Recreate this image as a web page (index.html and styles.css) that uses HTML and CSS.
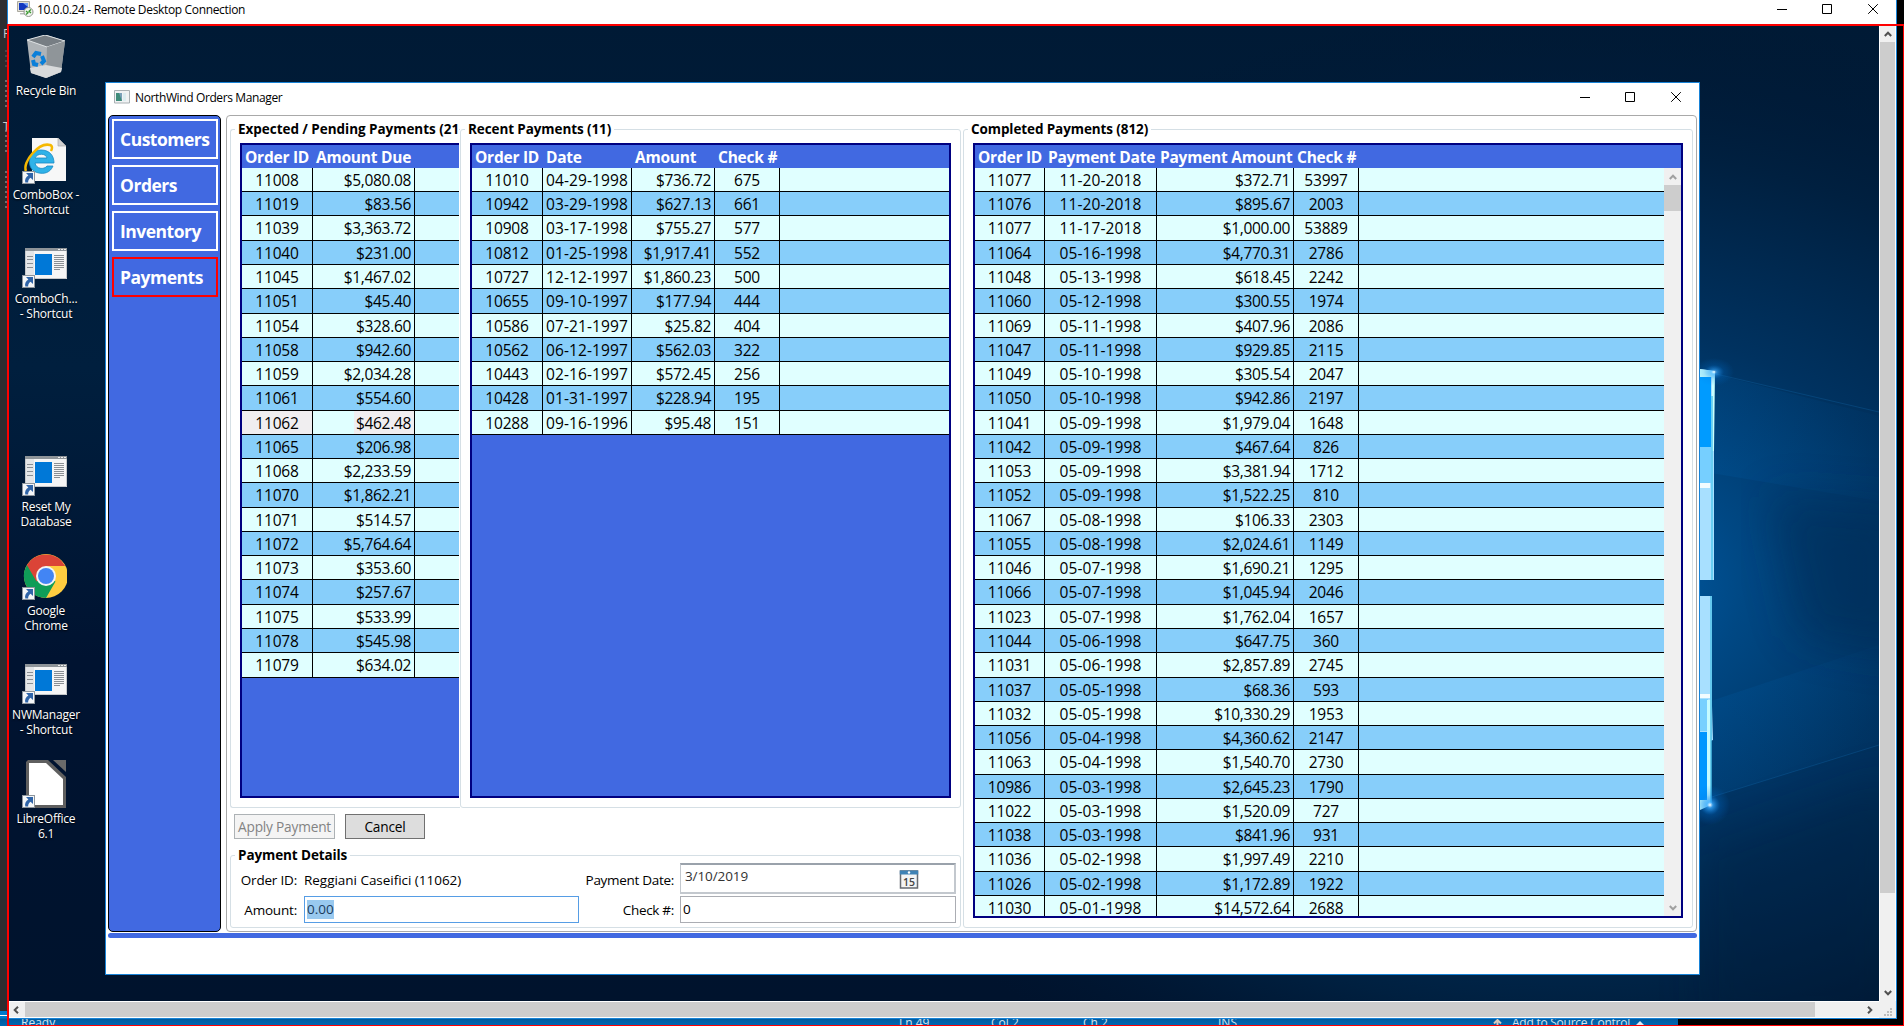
FILE: index.html
```html
<!DOCTYPE html>
<html lang="en">
<head>
<meta charset="utf-8">
<title>10.0.0.24 - Remote Desktop Connection</title>
<link rel="stylesheet" href="styles.css">
</head>
<body>
<svg width="0" height="0" class="defs">
  <defs>
    <symbol id="link" viewBox="0 0 13 13"><rect x=".5" y=".5" width="12" height="12" fill="#f4f6f8" stroke="#8d959c"/><path d="M4 2h7v7L8.600 6.700C6.600 8 6 9.500 6.200 11.500H3.300C2.500 8.500 3.800 6 6.400 4.400z" fill="#2f64a8"/></symbol>
    <symbol id="app" viewBox="0 0 42 31"><rect width="42" height="31" fill="#f5f5f5"/><rect width="42" height="3" fill="#8e9499"/><path d="M33 1h2v1h-2zm3 0h2v1h-2zm3 0h2v1h-2z" fill="#eee"/><rect x="1" y="3" width="8" height="27" fill="#e4e6e8"/><rect x="10" y="6" width="17" height="21" fill="#0078d7"/><path d="M2 8.500h6M2 11.500h6M2 15.500h6M2 19.500h6M29 7.500h10M29 9.500h10M29 11.500h10M29 13.500h10M29 15.500h10M29 17.500h10M29 19.500h10M29 21.500h6" stroke="#8a8f94"/><path d="M.5 3v27.500h41V3" fill="none" stroke="#c4c7ca"/></symbol>
    <symbol id="controls" viewBox="0 0 102 11"><path d="M0 5.500h10M45.500.5h9v9h-9z" fill="none" stroke="#000"/><path d="M91.200.2l9.600 9.600M100.800.2l-9.600 9.600" stroke="#000"/></symbol>
    <symbol id="chev" viewBox="0 0 8 6"><path d="M.8 5L4 1.700 7.200 5" fill="none" stroke="currentColor" stroke-width="2"/></symbol>
  </defs>
</svg>

<div class="host">
  <aside class="ide-edge">
    <span class="e1">F</span><span class="dots d1"></span><span class="dots d2"></span><span class="e2">T</span><span class="dots d3"></span><span class="dots d4"></span>
  </aside>
  <footer class="ide-status">
    <i class="tab"></i><span class="s-ready">Ready</span><span class="s-ln">Ln 49</span><span class="s-col">Col 2</span><span class="s-ch">Ch 2</span><span class="s-ins">INS</span><span class="s-up"><svg width="9" height="8" viewBox="0 0 9 8"><path d="M1 4.500L4.500 1 8 4.500M4.500 1v7" fill="none" stroke="#d8c9be" stroke-width="2"/></svg></span><span class="s-src">Add to Source Control</span><svg class="s-tri" width="8" height="5"><path d="M0 5l4-4 4 4z" fill="#dfe9f2"/></svg>
  </footer>

  <section class="rdp">
    <header class="rdp-title">
      <svg width="17" height="16" viewBox="0 0 17 16"><path d="M.5.500h12v10H.5z" fill="#e3e1d8" stroke="#aaa99f"/><path d="M2 2h9v7H2z" fill="#1238c0"/><path d="M6 2h5v4z" fill="#6f9df0"/><path d="M3 12h7v1.500H3z" fill="#bbb"/><circle cx="11.500" cy="11" r="4.500" fill="#f3f5f0" stroke="#8f958d"/><path d="M9 10l2 1.800L9 13.500M14 8.500l-2 1.700 2 1.800" fill="none" stroke="#3c9a32" stroke-width="1.300"/></svg>
      <span>10.0.0.24 - Remote Desktop Connection</span>
      <svg class="ctl" width="102" height="11"><use href="#controls"/></svg>
    </header>
    <div class="view">
      <main class="desktop">
        <svg class="wall" width="1870" height="975" viewBox="0 0 1870 975" preserveAspectRatio="none">
          <defs>
            <radialGradient id="glow" gradientUnits="userSpaceOnUse" cx="1560" cy="555" r="800" gradientTransform="translate(1560 555) scale(1 .72) translate(-1560 -555)"><stop offset="0" stop-color="#0064b4"/><stop offset=".22" stop-color="#004884"/><stop offset=".45" stop-color="#003260"/><stop offset=".75" stop-color="#002040"/><stop offset="1" stop-color="#001733" stop-opacity="0"/></radialGradient>
            <linearGradient id="beam" x1="0" x2="1"><stop offset="0" stop-color="#0067b8" stop-opacity=".5"/><stop offset="1" stop-color="#0067b8" stop-opacity=".1"/></linearGradient>
            <radialGradient id="spark"><stop offset="0" stop-color="#fff"/><stop offset=".15" stop-color="#35a8ff" stop-opacity=".8"/><stop offset=".5" stop-color="#0078e0" stop-opacity=".25"/><stop offset="1" stop-color="#0078e0" stop-opacity="0"/></radialGradient>
            <linearGradient id="base" x1="0" x2="0" y1="0" y2="1"><stop offset="0" stop-color="#001a35"/><stop offset=".35" stop-color="#001f3e"/><stop offset=".65" stop-color="#001331"/><stop offset="1" stop-color="#00132d"/></linearGradient>
            <filter id="soft" x="-20%" y="-40%" width="140%" height="180%"><feGaussianBlur stdDeviation="22"/></filter>
          </defs>
          <path d="M0 0h1870v975H0z" fill="url(#base)"/>
          <path d="M0 0h1870v975H0z" fill="url(#glow)"/>
          <path d="M1690 344l180 46v85l-180-30zM1690 775l180-56v-100l-180 60z" fill="url(#beam)" opacity=".35"/>
          <path d="M1760 470l140 10v150l-110-20z" fill="#00264d" opacity=".45" filter="url(#soft)"/>
          <path d="M1690 820l200-70v260h-200z" fill="#001a3a" opacity=".3" filter="url(#soft)"/>
          <path d="M1690 344l180 42M1690 775l180-56" stroke="#1676bd" opacity=".25"/>
          <path d="M1691 343l14 2v209h-14z" fill="#a8e0ff"/><path d="M1691 351h11v70h-11z" fill="#009bff"/><path d="M1691 421h11v36h-11z" fill="#76cfff"/><path d="M1691 457h10v5h-10z" fill="#f2fcff"/>
          <path d="M1691 343l15 2-1 80-2 0v-74h-12z" fill="#c9ffff"/><path d="M1703 370v184" stroke="#55c8ee" stroke-width="1.500"/>
          <path d="M1691 570h12v110l1 34-13 5z" fill="#a8e0ff"/><path d="M1691 668h10v4h-10z" fill="#f2fcff"/><path d="M1691 673h8v32h-8z" fill="#78d0ff"/><path d="M1691 706h8v70h-8z" fill="#0096ff"/><path d="M1691 774h7v-100h4v105l-11 5z" fill="#c6fbff"/><path d="M1702 570v208" stroke="#4cc0e8" stroke-width="1.500"/>
          <ellipse cx="1705" cy="346" rx="20" ry="14" fill="url(#spark)" opacity=".8"/><circle cx="1701" cy="779" r="20" fill="url(#spark)"/>
        </svg>

        <div class="shortcut i1"><svg width="42" height="43" viewBox="0 0 42 43"><path d="M2 5l4 33 15 5 15-6 4-31-18-6z" fill="#aeb3b7"/><path d="M2 5l20 7 18-6L20 0z" fill="#777e84" stroke="#dfe3e5"/><path d="M22 12l18-6-4 31-15 6z" fill="#8f9599"/><path d="M5 33l16-3 16 3-1 4-15 6-15-5z" fill="#d8dadb"/><g fill="none" stroke="#0a7fd9" stroke-width="4"><path d="M8 22l3-4 5 1"/><path d="M17 21l2 5-3 3"/><path d="M13 30l-4-1-1-4"/></g></svg><span>Recycle Bin</span></div>
        <div class="shortcut i2"><svg width="46" height="46" viewBox="0 0 46 46"><path d="M11 0h26l8 8v35H11z" fill="#f7f7f7"/><path d="M37 0v8h8z" fill="#d0d0d0" stroke="#aaa" stroke-width=".7"/><path d="M33 25H14c1 6 9 7 12 3h6c-3 7-9 8-14 7C4 33 6 12 20 12c9 0 13 6 13 13zM14 20h12c-1-5-10-5-12 0z" fill="#2fb2e8" stroke="#1789c4" stroke-width=".8"/><path d="M5 33C1 24 18 4 29 7c3 1 2 4 1 6" fill="none" stroke="#f5b800" stroke-width="2.500"/><use href="#link" x="1" y="33" width="13" height="13"/></svg><span>ComboBox -<br>Shortcut</span></div>
        <div class="shortcut i3"><svg width="46" height="41"><use href="#app" x="4" y="0" width="42" height="31"/><use href="#link" x="1" y="27" width="13" height="13"/></svg><span>ComboCh...<br>- Shortcut</span></div>
        <div class="shortcut i4"><svg width="46" height="41"><use href="#app" x="4" y="0" width="42" height="31"/><use href="#link" x="1" y="27" width="13" height="13"/></svg><span>Reset My<br>Database</span></div>
        <div class="shortcut i5"><svg width="46" height="46" viewBox="0 0 46 46"><circle cx="25" cy="22" r="22" fill="#ffcd40"/><path d="M25 22L5.900 11A22 22 0 0 0 25 44l9.500-16.500z" fill="#0f9d58"/><path d="M25 22l-9.500 5.500L5.900 11a22 22 0 0 1 38.200 1H25z" fill="#db4437"/><circle cx="25" cy="22" r="10" fill="#f4f4f4"/><circle cx="25" cy="22" r="8" fill="#4285f4"/><use href="#link" x="1" y="33" width="13" height="13"/></svg><span>Google<br>Chrome</span></div>
        <div class="shortcut i6"><svg width="46" height="41"><use href="#app" x="4" y="0" width="42" height="31"/><use href="#link" x="1" y="27" width="13" height="13"/></svg><span>NWManager<br>- Shortcut</span></div>
        <div class="shortcut i7"><svg width="46" height="48" viewBox="0 0 46 48"><path d="M7 0h20l18 17v31H5V2z" fill="#5f5f5f"/><path d="M8 3h17l17 16v26H8z" fill="#fff"/><path d="M32 0h13v12z" fill="#6a6a6a"/><use href="#link" x="1" y="35" width="13" height="13"/></svg><span>LibreOffice<br>6.1</span></div>

        <section class="window">
          <header class="win-title">
            <svg width="16" height="14" viewBox="0 0 16 14"><path d="M.5.500h15v12.500H.5z" fill="#f0f2f3" stroke="#a9b0b3"/><path d="M2 3h6v8H2z" fill="#3f8c7a"/><path d="M5 3h3v8z" fill="#7aa0b8"/><path d="M9 3h3v8H9z" fill="#dcecf0"/></svg>
            <span>NorthWind Orders Manager</span>
            <svg class="ctl" width="102" height="11"><use href="#controls"/></svg>
          </header>
          <div class="body">
            <nav class="nav"><a>Customers</a><a>Orders</a><a>Inventory</a><a class="on">Payments</a></nav>
            <div class="panel">
              <div class="left">
                <div class="lists">
                  <section class="group pending"><h2>Expected / Pending Payments (21</h2><div class="grid" id="pending"></div></section>
                  <section class="group recent"><h2>Recent Payments (11)</h2><div class="grid" id="recent"></div></section>
                </div>
                <div class="actions"><button class="apply" disabled>Apply Payment</button><button class="cancel">Cancel</button></div>
                <section class="group details"><h2>Payment Details</h2>
                  <div class="form">
                    <label class="up">Order ID:</label><span class="who up">Reggiani Caseifici (11062)</span>
                    <label class="up tight">Payment Date:</label><div class="date"><span>3/10/2019</span><svg width="20" height="19" viewBox="0 0 20 19"><path d="M1.500 1h17v17h-17z" fill="#f4f4f4" stroke="#666a70" stroke-width="1.500"/><path d="M.8.500h18.400v4H.8z" fill="#3f82b5"/><circle cx="10" cy="2.500" r="1.200" fill="#fff"/><text x="10" y="15.500" text-anchor="middle">15</text></svg></div>
                    <label>Amount:</label><div class="box focus"><mark>0.00</mark></div>
                    <label class="tight">Check #:</label><div class="box">0</div>
                  </div>
                </section>
              </div>
              <section class="group completed"><h2>Completed Payments (812)</h2><div class="grid" id="completed"></div></section>
            </div>
          </div>
          <div class="rule"></div>
        </section>
      </main>
      <div class="vbar"><svg width="8" height="6"><use href="#chev"/></svg><i></i><svg class="down" width="8" height="6"><use href="#chev"/></svg></div>
      <div class="hbar"><svg class="l" width="8" height="6"><use href="#chev"/></svg><i></i><svg class="r" width="8" height="6"><use href="#chev"/></svg></div>
      <div class="grip"><svg width="8" height="8"><path d="M6 0h2v2H6zM3 3h2v2H3zM6 3h2v2H6zM0 6h2v2H0zM3 6h2v2H3zM6 6h2v2H6z" fill="#bdbdbd"/></svg></div>
    </div>
  </section>
  <div class="frame"></div>
</div>
<script src="data.js"></script>
</body>
</html>
```
FILE: styles.css
```css
*{box-sizing:border-box}
body{margin:0;background:#fff;font-family:"Open Sans","Noto Sans",sans-serif;color:#000;overflow:hidden}
h2{margin:0;font-size:inherit}
svg{display:block;flex:none}
.defs{position:absolute}
.host{position:relative;width:1904px;height:1026px;background:#000;overflow:hidden}
.ide-edge{position:absolute;left:0;top:0;width:9px;height:1011px;background:#2d2d30;color:#ccc;overflow:hidden;font-size:12px;line-height:16px}
.ide-edge span{position:absolute;left:3px}
.ide-edge .e1{top:26px}
.ide-edge .e2{top:119px}
.ide-edge .dots{left:5px;width:2px;background:repeating-linear-gradient(#8a8a8c 0 2px,transparent 2px 5px);opacity:.7}
.ide-edge .d1{top:50px;height:18px;opacity:.3}
.ide-edge .d2{top:80px;height:30px}
.ide-edge .d3{top:130px;height:24px}
.ide-edge .d4{top:171px;height:39px}
.ide-status{position:absolute;left:0;top:1011px;width:1678px;height:15px;background:linear-gradient(#007acc 0 7px,#005a9e 8px,#0069b4);overflow:hidden;color:#d3e3f0;font-size:12px;line-height:16px;white-space:nowrap}
.ide-status span,.s-tri{position:absolute;top:4px}
.tab{position:absolute;left:0;top:4px;width:7px;height:11px;border-top:1px solid #fff}
.ide-status .s-ready{left:21px}
.s-ln{left:899px}.s-col{left:991px}.s-ch{left:1083px}.s-ins{left:1218px}
.ide-status .s-up{left:1493px;top:8px}
.s-src{left:1512px;letter-spacing:-.25px}
.ide-status .s-tri{left:1636px;top:9px}
.rdp{position:absolute;left:7px;top:0;width:1890px;height:1019px;border:1px solid #1883d7;border-top:0;background:#fff}
.rdp-title{height:26px;display:flex;align-items:flex-start;padding:1px 19px 0 9px;font-size:12px;line-height:18px;letter-spacing:-.34px}
.rdp-title span{margin-left:3px}
.ctl{margin-left:auto}
.rdp-title .ctl{margin-top:3px;margin-right:-2px}
.view{display:grid;grid-template:975px 17px/1871px 17px}
.desktop{position:relative;overflow:hidden;margin-left:1px}
.wall{display:block}
.vbar{border:solid #fff;border-width:0 1px;background:#f0f0f0;color:#505050;display:flex;flex-direction:column;align-items:center;padding:5px 0}
.vbar i{width:100%;height:851px;background:#cdcdcd;margin-top:5px}
.vbar .down{margin-top:auto;transform:rotate(180deg)}
.hbar{border:solid #fff;border-width:1px 0;background:#f0f0f0;color:#505050;display:flex;align-items:center;padding:0 5px 0 4px}
.hbar i{height:100%;width:1790px;background:#cdcdcd;margin-left:5px}
.hbar .l{transform:rotate(-90deg)}
.hbar .r{transform:rotate(90deg);margin-left:auto}
.grip{background:#f0f0f0;padding:7px 0 0 5px}
.frame{position:absolute;left:7px;top:24px;width:1897px;height:1002px;border:solid #f00;border-width:2px 1px 1px 2px}

.shortcut{position:absolute;left:0;width:74px;display:flex;flex-direction:column;align-items:center;color:#fff;font-size:12px;line-height:15px;letter-spacing:-.22px;text-align:center;text-shadow:0 1px 2px #000;white-space:nowrap}
.shortcut svg{margin-right:4px}
.shortcut span{margin-top:auto}
.i1{top:9px;height:63px}.i2{top:112px;height:79px}.i3{top:222px;height:73px}.i4{top:430px;height:73px}.i5{top:528px;height:79px}.i6{top:638px;height:73px}.i7{top:734px;height:81px}
.i1 svg{margin:0}

.window{position:absolute;left:96px;top:56px;width:1595px;height:893px;border:1px solid #1883d7;background:#fff}
.win-title{height:32px;display:flex;align-items:flex-start;padding:7px 17px 0 8px;font-size:12px;line-height:16px;letter-spacing:-.38px}
.win-title span{margin-left:5px}
.win-title .ctl{margin-top:2px}
.body{display:flex;gap:5px;padding:0 2px;height:817px}
.nav{width:113px;border:1px solid #000;border-radius:5px;background:#4169e1;padding:3px;display:flex;flex-direction:column;gap:6px}
.nav a{height:40px;width:106px;border:2px solid #fff;color:#fff;font-weight:700;font-size:17.500px;line-height:36px;padding-left:6px;letter-spacing:-.5px}
.nav .on{border-color:#f00}
.panel{flex:1;border:1px solid #a9a9a9;border-radius:4px;display:flex;gap:2px;padding:13px 3px 3px}
.left{width:731px;display:flex;flex-direction:column}
.lists{display:flex}
.group{display:block;border:1px solid #d5dfe5;border-radius:3px;min-width:0}
.group h2{width:fit-content;background:#fff;margin:-11px 0 0 4px;padding:0 3px;font-size:13.500px;line-height:20px;white-space:nowrap;letter-spacing:-.1px}
.grid{margin:4px 9px 8px;border:2px solid #000080;background:#4169e1;position:relative;overflow:hidden}
.pending{width:230px;height:679px;border-right:0;border-radius:3px 0 0 3px}
.group.pending h2{padding-right:0;letter-spacing:-.04px}
.pending .grid{height:655px;margin-right:1px;border-right:0}
.recent{width:501px;height:679px}
.recent .grid{height:655px}
.completed{width:730px;height:799px}
.completed .grid{height:775px}
.head{display:flex;height:23px;color:#fff;font-weight:700;font-size:15.500px;line-height:24px;white-space:nowrap;letter-spacing:-.24px}
.head span{padding-left:3px}
.rows{margin-top:-.06px}
.row{display:flex;height:24.280px;border-bottom:1px solid #000;background:#e0ffff;font-size:15.500px;line-height:25.400px;letter-spacing:-.2px;width:100%}
.row:nth-child(even){background:#87cefa}
.row span{border-right:1px solid #000;text-align:center;white-space:nowrap;flex:none;height:23.300px}
.row .amt{text-align:right;padding-right:3px;letter-spacing:-.32px}
.row .day{letter-spacing:.1px}
.row .tint{background:#f0eef0}
.row .tint2{background:linear-gradient(90deg,transparent 41px,#f0eef0 41px)}
.scroll{display:flex}
.scroll .rows{flex:1}
.sbar{width:17px;background:#f0f0f0;height:748px;color:#a0a0a0;display:flex;flex-direction:column;align-items:center;padding:6px 0 5px}
.sbar i{width:17px;height:26px;background:#cdcdcd;margin-top:5px}
.sbar .down{margin-top:auto;transform:rotate(180deg)}

.actions{display:flex;gap:10px;padding:6px 0 0 4px;height:47px}
button{font:13.700px/20px "Open Sans",sans-serif;height:25px;padding:0;border:1px solid #707070;background:#ddd;color:#000;letter-spacing:-.2px}
.apply{width:101px;background:#f4f4f4;border-color:#adb2b5;color:#838383}
.cancel{width:80px}
.details{height:73px}
.form{display:grid;grid-template:31px 27px/66px 275px 87px 276px;column-gap:7px;row-gap:2px;align-items:center;font-size:13.500px;line-height:20px;letter-spacing:-.03px;margin-top:-2px}
.form label{display:flex;justify-content:flex-end;white-space:nowrap;letter-spacing:-.2px}
.form .tight{letter-spacing:-.3px;margin-right:-1px}
.form .up{padding-top:2px}
.who{white-space:nowrap}
.box{border:1px solid #abadb3;height:27px;padding-left:2px;line-height:25px}
.focus{border-color:#569de5}
mark{background:#99c9ef;color:#1b3c5c;padding:0 0 1px;line-height:18px}
.date{height:31px;border:2px solid #c3c8ce;border-top-color:#9aa2ab;border-left-width:1px;color:#333;display:flex;padding:1px 35px 0 4px;justify-content:space-between}
.date span{letter-spacing:-.1px}
.date svg{margin-top:4px}
.date text{font:600 10.500px "Open Sans",sans-serif;fill:#444}
.rule{height:5px;border-radius:3px;background:#4169e1;margin:1px 2px 0}
```
FILE: data.js
```js
const pending = `11008 $5,080.08
11019 $83.56
11039 $3,363.72
11040 $231.00
11045 $1,467.02
11051 $45.40
11054 $328.60
11058 $942.60
11059 $2,034.28
11061 $554.60
11062 $462.48
11065 $206.98
11068 $2,233.59
11070 $1,862.21
11071 $514.57
11072 $5,764.64
11073 $353.60
11074 $257.67
11075 $533.99
11078 $545.98
11079 $634.02`;
const recent = `11010 04-29-1998 $736.72 675
10942 03-29-1998 $627.13 661
10908 03-17-1998 $755.27 577
10812 01-25-1998 $1,917.41 552
10727 12-12-1997 $1,860.23 500
10655 09-10-1997 $177.94 444
10586 07-21-1997 $25.82 404
10562 06-12-1997 $562.03 322
10443 02-16-1997 $572.45 256
10428 01-31-1997 $228.94 195
10288 09-16-1996 $95.48 151`;
const completed = `11077 11-20-2018 $372.71 53997
11076 11-20-2018 $895.67 2003
11077 11-17-2018 $1,000.00 53889
11064 05-16-1998 $4,770.31 2786
11048 05-13-1998 $618.45 2242
11060 05-12-1998 $300.55 1974
11069 05-11-1998 $407.96 2086
11047 05-11-1998 $929.85 2115
11049 05-10-1998 $305.54 2047
11050 05-10-1998 $942.86 2197
11041 05-09-1998 $1,979.04 1648
11042 05-09-1998 $467.64 826
11053 05-09-1998 $3,381.94 1712
11052 05-09-1998 $1,522.25 810
11067 05-08-1998 $106.33 2303
11055 05-08-1998 $2,024.61 1149
11046 05-07-1998 $1,690.21 1295
11066 05-07-1998 $1,045.94 2046
11023 05-07-1998 $1,762.04 1657
11044 05-06-1998 $647.75 360
11031 05-06-1998 $2,857.89 2745
11037 05-05-1998 $68.36 593
11032 05-05-1998 $10,330.29 1953
11056 05-04-1998 $4,360.62 2147
11063 05-04-1998 $1,540.70 2730
10986 05-03-1998 $2,645.23 1790
11022 05-03-1998 $1,520.09 727
11038 05-03-1998 $841.96 931
11036 05-02-1998 $1,997.49 2210
11026 05-02-1998 $1,172.89 1922
11030 05-01-1998 $14,572.64 2688`;

function build(id, heads, widths, text, scroll) {
  const head = heads.map((h, i) => `<span style="width:${widths[i]}px">${h}</span>`).join('');
  const rows = text.split('\n').map(line => {
    const cells = line.split(' ');
    const marked = id === 'pending' && cells[0] === '11062';
    return '<div class="row">' + cells.map((c, i) => {
      let cls = c[0] === '$' ? 'amt' : c.includes('-') ? 'day' : 'num';
      if (marked) cls += i ? ' tint2' : ' tint';
      return `<span class="${cls}" style="width:${widths[i]}px">${c}</span>`;
    }).join('') + '</div>';
  }).join('');
  const bar = '<div class="sbar"><svg width="8" height="6"><use href="#chev"/></svg><i></i><svg class="down" width="8" height="6"><use href="#chev"/></svg></div>';
  document.getElementById(id).innerHTML = `<div class="head">${head}</div>` +
    (scroll ? `<div class="scroll"><div class="rows">${rows}</div>${bar}</div>` : `<div class="rows">${rows}</div>`);
}
build('pending', ['Order ID', 'Amount Due'], [71, 102], pending);
build('recent', ['Order ID', 'Date', 'Amount', 'Check #'], [71, 89, 83, 65], recent);
build('completed', ['Order ID', 'Payment Date', 'Payment Amount', 'Check #'], [70, 112, 137, 65], completed, true);
```
